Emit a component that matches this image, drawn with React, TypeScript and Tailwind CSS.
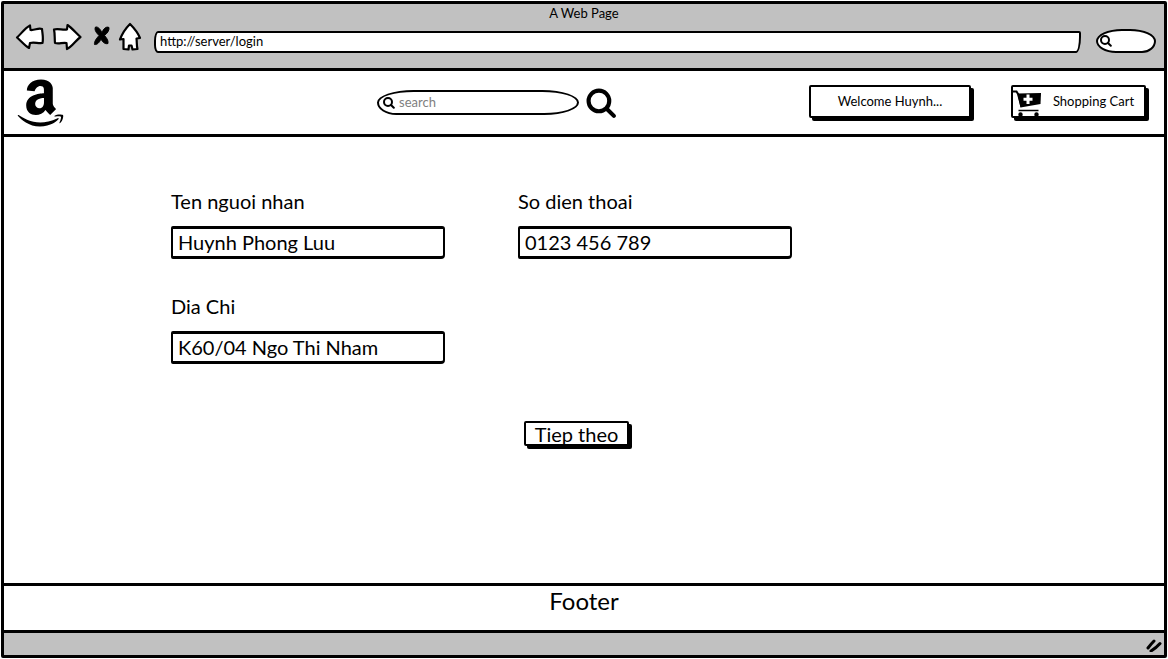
import React from "react";
import { FaAmazon } from "react-icons/fa";

function NavIcons() {
  return (
    <div className="flex items-center">
      <button type="button" aria-label="Back">
        <svg width="30" height="28" viewBox="15 23 30 28" fill="white" stroke="black" strokeWidth="2.2" strokeLinejoin="round">
          <path d="M17 37.500 C21 34 25 28 30 25.500 L30.500 30 C35 30.500 38 27.500 42 29 C42.500 34 43.500 38 42.500 43 C38 43.500 34 42 30 43 L29 48 C25 46 21 41 17 37.500Z" />
        </svg>
      </button>
      <button type="button" aria-label="Forward" className="ml-[7px]">
        <svg width="30" height="28" viewBox="52 23 30 28" fill="white" stroke="black" strokeWidth="2.2" strokeLinejoin="round">
          <path d="M54 29.500 C58 28 63 30.500 67 29.500 L67.500 25 C72 28 76 33 80.500 37 C76 40 72 47 67 49 L66.500 43 C62 42.500 59 44 55 43 C54.500 38 55 34 54 29.500Z" />
        </svg>
      </button>
      <button type="button" aria-label="Stop" className="ml-[10px]">
        <svg width="20" height="28" viewBox="92 23 20 28" fill="black" stroke="black" strokeWidth="1" strokeLinejoin="round">
          <path d="M95.500 27 C98 26.500 100 29 102 32.500 C103.500 29 106 26 109 27.500 C109.500 30.500 107 33.500 104.500 35.500 C106.500 38 108.500 40 108 43.500 C105 44.500 102.500 42 101 39 C99.500 42.500 97 45 94.500 44.500 C94 41.500 96.500 38.500 99 35.500 C96.500 33 94 30 95.500 27Z" />
        </svg>
      </button>
      <button type="button" aria-label="Home" className="ml-[6px]">
        <svg width="24" height="30" viewBox="118 22 24 30" fill="white" stroke="black" strokeWidth="2.2" strokeLinejoin="round">
          <path d="M130 24 C133 27 138 33 140 38 L136.500 38.500 C137 42 136.500 46 137.500 49 L132.500 49.500 L131.500 45.500 L129 45.500 L128.500 49.500 L123.500 49 L123.500 39 L120 39.500 C122 34 126 28 130 24Z" />
        </svg>
      </button>
    </div>
  );
}

function SearchGlyph({ className, strokeWidth }: { className: string; strokeWidth: number }) {
  return (
    <svg className={className} viewBox="0 0 30 30" fill="none" stroke="black" strokeWidth={strokeWidth} strokeLinecap="round" aria-hidden="true">
      <circle cx="12.5" cy="12.5" r="10" />
      <path d="M20 20 L27 27" />
    </svg>
  );
}

function CartIcon() {
  return (
    <svg width="30" height="29" viewBox="1013 88 30 29" className="shrink-0" aria-hidden="true">
      <path d="M1012 92.500 H1016.500 L1018 95 L1021.500 108" fill="none" stroke="black" strokeWidth="2" />
      <path d="M1017.500 94.500 L1041 94 L1040.500 105 L1020.500 108.500Z" />
      <path d="M1028 95.500 V105 M1023.500 100.200 H1032.500" stroke="white" strokeWidth="3" />
      <path d="M1018.500 111.500 H1038.500" stroke="black" strokeWidth="1.500" />
      <circle cx="1020.500" cy="115.500" r="2.200" />
      <circle cx="1036.500" cy="115.500" r="2.200" />
    </svg>
  );
}

function BrowserBar() {
  return (
    <div className="border-b-3 border-black bg-[#c1c1c1] pb-[15px]">
      <div className="pt-px text-center text-[13px] leading-[16px]">A Web Page</div>
      <div className="flex h-8 items-center pr-2 pl-[11px]">
        <NavIcons />
        <input
          aria-label="Address"
          defaultValue="http://server/login"
          className="mt-[10px] ml-3 h-[22px] min-w-0 flex-1 rounded-[4px_2px_5px_4px/10px_2px_16px_8px] border-[2px] border-black bg-white px-1 pb-[3px] text-[13px] leading-4 outline-none"
        />
        <label className="mt-2 ml-[15px] flex h-6 w-[60px] items-center rounded-[26px_26px_14px_20px/12px] border-2 border-black bg-white pl-[2px]">
          <SearchGlyph className="h-3 w-3 shrink-0" strokeWidth={5} />
          <input aria-label="Browser search" className="w-full min-w-0 bg-transparent text-xs outline-none" />
        </label>
      </div>
    </div>
  );
}

function SiteHeader() {
  return (
    <header className="flex h-[66px] items-center border-b-3 border-black pr-[15px] pl-[13px]">
      <a href="#" aria-label="Home page">
        <FaAmazon className="h-[54px] w-[47px]" />
      </a>
      <label className="ml-[313px] flex h-[25px] w-[202px] items-center rounded-[38px_38px_36px_20px/13px] border-2 border-black px-1">
        <SearchGlyph className="h-3 w-3 shrink-0" strokeWidth={5} />
        <input
          aria-label="Search"
          placeholder="search"
          className="ml-1 w-full min-w-0 bg-transparent pb-[2px] text-[13px] leading-4 outline-none placeholder:text-[#808080]"
        />
      </label>
      <button type="button" aria-label="Search" className="ml-[7px] pt-[2px]">
        <SearchGlyph className="h-[31px] w-[31px]" strokeWidth={4} />
      </button>
      <button
        type="button"
        className="mr-1 ml-auto mb-[2px] h-[33px] w-[162px] rounded-[2px] border-2 border-black bg-white text-[13px] shadow-[3px_3px_0_0_#000]"
      >
        Welcome Huynh...
      </button>
      <button
        type="button"
        className="mr-[3px] mb-[2px] ml-[36px] flex h-[33px] w-[135px] items-center rounded-[2px] border-2 border-black bg-white text-[13px] shadow-[3px_3px_0_0_#000]"
      >
        <CartIcon />
        <span className="flex-1 text-center">Shopping Cart</span>
      </button>
    </header>
  );
}

function Field({ id, label, value }: { id: string; label: string; value: string }) {
  return (
    <div>
      <label htmlFor={id} className="block text-xl leading-6">
        {label}
      </label>
      <input
        id={id}
        defaultValue={value}
        className="mt-[13px] h-[33px] w-full rounded-[2px_3px_4px_2px] border-x-2 border-y-3 border-black bg-white px-[5px] pb-px text-xl leading-6 outline-none"
      />
    </div>
  );
}

export default function App() {
  return (
    <div className="flex min-h-screen flex-col bg-white p-px font-['Lato','Open_Sans',sans-serif] text-black">
      <div className="flex flex-1 flex-col rounded-[2px] border-3 border-black">
        <BrowserBar />
        <SiteHeader />
        <main className="flex-1 pt-[52px] pl-[167px]">
          <form className="grid grid-cols-[274px_274px] gap-x-[73px] gap-y-[35px]" onSubmit={(e) => e.preventDefault()}>
            <Field id="name" label="Ten nguoi nhan" value="Huynh Phong Luu" />
            <Field id="phone" label="So dien thoai" value="0123 456 789" />
            <Field id="address" label="Dia Chi" value="K60/04 Ngo Thi Nham" />
            <button
              type="submit"
              className="col-start-2 row-start-3 mt-[22px] ml-[6px] h-[25px] w-[105px] rounded-[2px] border-2 border-black bg-white text-xl leading-5 shadow-[3px_3px_0_0_#000]"
            >
              Tiep theo
            </button>
          </form>
        </main>
        <footer className="h-[50px] border-y-3 border-black pt-px text-center text-2xl leading-7">Footer</footer>
        <div className="flex h-[22px] items-center justify-end bg-[#c1c1c1]">
          <svg width="18" height="16" viewBox="0 0 18 16" stroke="black" strokeWidth="3" strokeLinecap="round" aria-hidden="true">
            <path d="M2 12 Q5 8 8 5 M5 15 Q10 12 14 7.500" fill="none" />
          </svg>
        </div>
      </div>
    </div>
  );
}
